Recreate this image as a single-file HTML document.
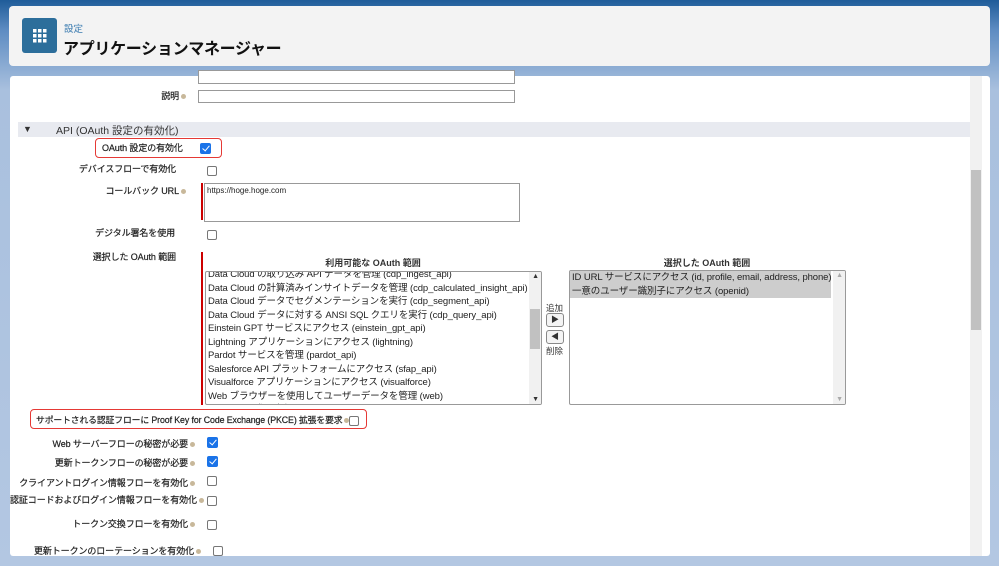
<!DOCTYPE html>
<html><head><meta charset="utf-8"><style>
*{box-sizing:border-box;margin:0;padding:0}
body{width:999px;height:566px;overflow:hidden;position:relative;background:linear-gradient(#1f5c99 0,#5d8cc2 30px,#a9c0de 90px,#b3c7e2 100%);font-family:"Liberation Sans","Noto Sans CJK JP",sans-serif;color:#333}
.a{position:absolute}
.lbl{position:absolute;font-size:9px;color:#222;text-align:right;white-space:nowrap;letter-spacing:-0.1px;-webkit-text-stroke:0.2px #222}
.cb{position:absolute;width:10px;height:10px;border:1px solid #777;border-radius:2px;background:#fff}
.ck{position:absolute;width:11px;height:11px;border-radius:2px;background:#1a73e8}
.ck:after{content:"";position:absolute;left:3.5px;top:1px;width:3px;height:6px;border:solid #fff;border-width:0 1.6px 1.6px 0;transform:rotate(40deg)}
.inp{position:absolute;border:1px solid #999;background:#fff}
.rb{position:absolute;border:1.5px solid #e53935;border-radius:4px}
.red{position:absolute;width:2px;background:#c00}
.it{font-size:9.5px;line-height:13.5px;color:#222;white-space:nowrap;padding-left:2px;letter-spacing:-0.1px}
.q{display:inline-block;width:5px;height:5px;border-radius:50%;background:#c8b89a;margin-left:2px;vertical-align:middle}
</style></head><body>
<div class="a" style="left:9px;top:6px;width:981px;height:60px;background:#f3f3f3;border-radius:4px"></div>
<div class="a" style="left:22px;top:18px;width:35px;height:35px;background:#2c6e9b;border-radius:3px">
<svg width="35" height="35"><g fill="#fff"><rect x="11" y="11" width="3.5" height="3.5"/><rect x="16" y="11" width="3.5" height="3.5"/><rect x="21" y="11" width="3.5" height="3.5"/><rect x="11" y="16" width="3.5" height="3.5"/><rect x="16" y="16" width="3.5" height="3.5"/><rect x="21" y="16" width="3.5" height="3.5"/><rect x="11" y="21" width="3.5" height="3.5"/><rect x="16" y="21" width="3.5" height="3.5"/><rect x="21" y="21" width="3.5" height="3.5"/></g></svg></div>
<div class="a" style="left:64px;top:21px;font-size:9.5px;color:#3a7bb0">設定</div>
<div class="a" style="left:63px;top:35px;font-size:16px;font-weight:bold;color:#111;letter-spacing:-0.3px">アプリケーションマネージャー</div>

<div class="a" style="left:10px;top:76px;width:980px;height:480px;background:#fff;border-radius:3px;overflow:hidden">
<div class="a" style="left:960px;top:0;width:12px;height:480px;background:#f1f1f1"></div>
<div class="a" style="left:961px;top:94px;width:10px;height:160px;background:#c1c1c1"></div>
</div>
<div class="inp" style="left:198px;top:70px;width:317px;height:14px"></div>
<div class="lbl" style="left:120px;top:89px;width:66px">説明<span class="q"></span></div>
<div class="inp" style="left:198px;top:90px;width:317px;height:13px"></div>

<div class="a" style="left:18px;top:122px;width:952px;height:15px;background:#e8eaf0"></div>
<div class="a" style="left:23px;top:124px;font-size:9px">▼</div>
<div class="a" style="left:56px;top:123px;font-size:10.5px;color:#333">API (OAuth 設定の有効化)</div>

<div class="rb" style="left:95px;top:138px;width:127px;height:20px"></div>
<div class="lbl" style="left:102px;top:141px">OAuth 設定の有効化</div>
<div class="ck" style="left:200px;top:143px"></div>

<div class="lbl" style="left:60px;top:162px;width:116px">デバイスフローで有効化</div>
<div class="cb" style="left:207px;top:166px"></div>
<div class="lbl" style="left:60px;top:184px;width:126px">コールバック URL<span class="q"></span></div>
<div class="red" style="left:201px;top:183px;height:37px"></div>
<div class="inp" style="left:204px;top:183px;width:316px;height:39px;font-size:8px;padding:2px 2px;color:#222">https://hoge.hoge.com</div>
<div class="lbl" style="left:60px;top:226px;width:115px">デジタル署名を使用</div>
<div class="cb" style="left:207px;top:230px"></div>
<div class="lbl" style="left:60px;top:250px;width:116px">選択した OAuth 範囲</div>
<div class="red" style="left:201px;top:252px;height:153px"></div>
<div class="a" style="left:205px;top:256px;width:336px;text-align:center;font-size:9px;font-weight:bold">利用可能な OAuth 範囲</div>
<div class="a" style="left:569px;top:256px;width:276px;text-align:center;font-size:9px;font-weight:bold">選択した OAuth 範囲</div>

<div class="inp" style="left:205px;top:271px;width:337px;height:134px;overflow:hidden;border-radius:2px">
<div class="a" style="left:0;top:-4px">
<div class="it">Data Cloud の取り込み API データを管理 (cdp_ingest_api)</div>
<div class="it">Data Cloud の計算済みインサイトデータを管理 (cdp_calculated_insight_api)</div>
<div class="it">Data Cloud データでセグメンテーションを実行 (cdp_segment_api)</div>
<div class="it">Data Cloud データに対する ANSI SQL クエリを実行 (cdp_query_api)</div>
<div class="it">Einstein GPT サービスにアクセス (einstein_gpt_api)</div>
<div class="it">Lightning アプリケーションにアクセス (lightning)</div>
<div class="it">Pardot サービスを管理 (pardot_api)</div>
<div class="it">Salesforce API プラットフォームにアクセス (sfap_api)</div>
<div class="it">Visualforce アプリケーションにアクセス (visualforce)</div>
<div class="it">Web ブラウザーを使用してユーザーデータを管理 (web)</div>
<div class="it">いつでも要求を実行 (refresh_token, offline_access)</div>
</div>
<div class="a" style="right:0;top:0;width:12px;height:132px;background:#f1f1f1"></div>
<div class="a" style="right:1px;top:37px;width:10px;height:40px;background:#c1c1c1"></div>
<div class="a" style="right:2px;top:1px;font-size:7px">▲</div>
<div class="a" style="right:2px;bottom:1px;font-size:7px">▼</div>
</div>
<div class="a" style="left:546px;top:302px;font-size:8.5px">追加</div>
<div class="a" style="left:546px;top:313px;width:18px;height:14px;border:1px solid #888;border-radius:3px;background:#f4f4f4;font-size:8px;text-align:center;line-height:12px">▶</div>
<div class="a" style="left:546px;top:330px;width:18px;height:14px;border:1px solid #888;border-radius:3px;background:#f4f4f4;font-size:8px;text-align:center;line-height:12px">◀</div>
<div class="a" style="left:546px;top:345px;font-size:8.5px">削除</div>

<div class="inp" style="left:569px;top:270px;width:277px;height:135px;border-radius:2px;overflow:hidden">
<div class="a" style="left:0;top:0;width:261px;height:27px;background:#cdcdcd"></div>
<div class="a" style="left:0;top:0">
<div class="it">ID URL サービスにアクセス (id, profile, email, address, phone)</div>
<div class="it">一意のユーザー識別子にアクセス (openid)</div></div>
<div class="a" style="right:0;top:0;width:12px;height:133px;background:#f1f1f1"></div>
<div class="a" style="right:2px;top:1px;font-size:7px;color:#aaa">▲</div>
<div class="a" style="right:2px;bottom:1px;font-size:7px;color:#aaa">▼</div>
</div>

<div class="rb" style="left:30px;top:409px;width:337px;height:20px"></div>
<div class="lbl" style="left:36px;top:413px;font-size:8.8px;letter-spacing:-0.1px">サポートされる認証フローに Proof Key for Code Exchange (PKCE) 拡張を要求<span class="q"></span></div>
<div class="cb" style="left:349px;top:416px"></div>

<div class="lbl" style="left:40px;top:437px;width:155px">Web サーバーフローの秘密が必要<span class="q"></span></div>
<div class="ck" style="left:207px;top:437px"></div>
<div class="lbl" style="left:40px;top:456px;width:155px">更新トークンフローの秘密が必要<span class="q"></span></div>
<div class="ck" style="left:207px;top:456px"></div>
<div class="lbl" style="left:10px;top:476px;width:185px">クライアントログイン情報フローを有効化<span class="q"></span></div>
<div class="cb" style="left:207px;top:476px"></div>
<div class="lbl" style="left:10px;top:493px;width:185px">認証コードおよびログイン情報フローを有効化<span class="q"></span></div>
<div class="cb" style="left:207px;top:496px"></div>
<div class="lbl" style="left:10px;top:517px;width:185px">トークン交換フローを有効化<span class="q"></span></div>
<div class="cb" style="left:207px;top:520px"></div>
<div class="lbl" style="left:10px;top:544px;width:191px">更新トークンのローテーションを有効化<span class="q"></span></div>
<div class="cb" style="left:213px;top:546px"></div>
</body></html>
